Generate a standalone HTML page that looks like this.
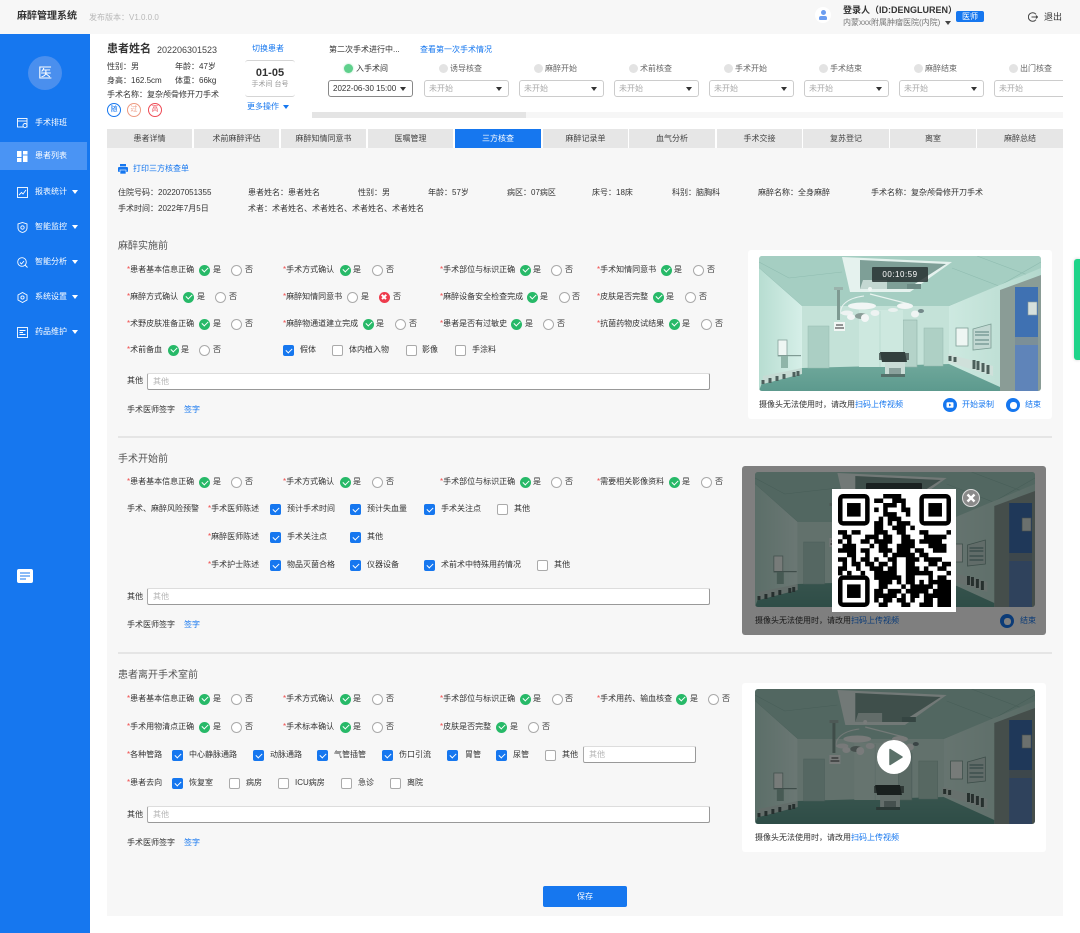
<!DOCTYPE html>
<html lang="zh-CN"><head><meta charset="utf-8"><title>麻醉管理系统</title>
<style>
html,body{margin:0;padding:0;width:1080px;height:933px;overflow:hidden;background:#fff}
body{position:relative;font-family:"Liberation Sans","Noto Sans CJK SC",sans-serif;color:#333;filter:blur(.35px)}
div,span,svg,i{position:absolute;box-sizing:border-box}
.t{font-size:8px;line-height:10px;white-space:nowrap;color:#333}
.b{color:#1677ef}
.w{color:#fff}
.s{color:#f04a4a;font-weight:400}
.h{font-size:10px;line-height:12px;color:#555;white-space:nowrap}
.g,.o,.x{width:11px;height:11px;border-radius:50%}
.o{background:#fff;border:1px solid #aaa}
.g{background:#27b968}
.x{background:#ee3b4c}
.g:after,.c:after{content:"";position:absolute;left:3px;top:2.6px;width:5px;height:3px;border-left:1.3px solid #fff;border-bottom:1.3px solid #fff;transform:rotate(-45deg)}
.x:before,.x:after{content:"";position:absolute;left:2.5px;top:4.7px;width:6px;height:1.6px;background:#fff;transform:rotate(45deg)}
.x:after{transform:rotate(-45deg)}
.c,.u{width:11px;height:11px;border-radius:2px}
.c{background:#1677ef}
.u{background:#fff;border:1px solid #aaa}
.in{background:#fff;border:1px solid #bbb;border-top-color:#ddd;border-left-color:#aaa;border-bottom-color:#999;border-right-color:#999;border-radius:2px;height:17px}
.in span{left:5px;top:3px;font-size:8px;line-height:10px;color:#b5b5b5}
.tab{top:129px;height:19px;background:#e6e6e6;font-size:8px;line-height:19px;text-align:center;color:#444}
.sel{top:80px;height:17px;width:85px;border:1px solid #ccc;border-radius:3px;background:#fff;font-size:8px;line-height:15px;padding-left:4px;color:#aaa;white-space:nowrap}
.sel:after{content:"";position:absolute;right:6px;top:6px;border-left:3px solid transparent;border-right:3px solid transparent;border-top:4px solid #333}
.d{width:9px;height:9px;border-radius:50%;background:#e3e3e3;top:64px}
.card{background:#fff;border-radius:3px}
.dn{border-left:3px solid transparent;border-right:3px solid transparent;border-top:4px solid #fff;width:0;height:0}
.div{left:118px;width:934px;height:2px;background:#e5e5e5}
</style></head><body>

<svg width="0" height="0" style="left:0;top:0">
<defs>
<linearGradient id="lw" x1="0" y1="0" x2="1" y2="0"><stop offset="0" stop-color="#b7ddd1"/><stop offset="1" stop-color="#d6efe8"/></linearGradient>
<linearGradient id="rw" x1="0" y1="0" x2="1" y2="0"><stop offset="0" stop-color="#cde9e0"/><stop offset="1" stop-color="#b4d8cd"/></linearGradient>
<linearGradient id="fl" x1="0" y1="0" x2="0" y2="1"><stop offset="0" stop-color="#6fa89b"/><stop offset="1" stop-color="#5d9a8e"/></linearGradient>
<symbol id="room" viewBox="0 0 282 135">
<rect width="282" height="135" fill="#a8cfc4"/>
<polygon points="0,0 282,0 282,14 190,50 43,50 0,12" fill="#a5cec2"/>
<path d="M0 12 43 50M282 14 190 50M0 6 30 22 83 16M193 12 240 30 282 6M218 0 282 24" stroke="#8fbcb0" stroke-width=".6" fill="none"/>
<polygon points="0,12 43,50 43,112 4,124 0,135" fill="url(#lw)"/>
<rect x="43" y="50" width="147" height="62" fill="#c4e2d8"/>
<polygon points="190,50 282,12 282,135 240,135 190,108" fill="url(#rw)"/>
<polygon points="0,135 4,124 43,112 190,108 241,131 241,135" fill="url(#fl)"/>
<polygon points="83,1 193,6 151,36 91,36" fill="#e5f2ee"/>
<polygon points="101,4 187,8 148,33 101,33" fill="#7e9f97"/>
<polygon points="104,24 128,24 128,33 101,33" fill="#c4d8d2"/>
<rect x="148" y="28" width="14" height="5" fill="#6b8a84"/>
<rect x="49" y="70" width="21" height="42" fill="#abcfc4" stroke="#95bbb0" stroke-width=".5"/>
<rect x="144" y="64" width="14" height="47" fill="#b4d3c9" stroke="#8fb3a8" stroke-width=".6"/>
<rect x="165" y="72" width="19" height="38" fill="#aed0c5" stroke="#96b9ae" stroke-width=".5"/>
<rect x="100" y="54" width="44" height="57" fill="#cde8df"/>
<path d="M121 55V111" stroke="#abcfc4" stroke-width=".5"/>
<rect x="197" y="72" width="12" height="18" fill="#eef6f3" stroke="#7f9f97" stroke-width=".8"/>
<polygon points="214,73 232,68 232,92 214,94" fill="#c2d8d2" stroke="#7b9d94" stroke-width=".8"/>
<path d="M216 76h14M216 79h14M216 84h14M216 88h14" stroke="#58807c" stroke-width="1"/>
<rect x="19" y="84" width="9" height="16" fill="#eef6f3" stroke="#86a29b" stroke-width=".8"/>
<rect x="19" y="99" width="23" height="1.2" fill="#7f9b94"/>
<rect x="22" y="100" width="7" height="12" fill="#8fb5a9"/>
<polygon points="4,120 43,112 43,118 4,128" fill="#c6dbd4"/>
<path d="M4 124v4M11 122v5M18 120v5M25 118v5M35 116v5M39 115v5" stroke="#4d5f5c" stroke-width="3"/>
<polygon points="189,106 234,120 234,110 189,98" fill="#cfe0da"/>
<path d="M191 105v-5M196 106v-5M215 113v-9M219 114v-9M224 116v-9M229 118v-9" stroke="#4c5f5b" stroke-width="3"/>
<polygon points="241,34 282,19 282,135 241,135" fill="#8a9c96"/>
<rect x="256" y="31" width="23" height="50" fill="#3f71b2"/>
<rect x="256" y="81" width="23" height="8" fill="#7b8f98"/>
<rect x="256" y="89" width="23" height="46" fill="#5f84b9"/>
<rect x="269" y="46" width="9" height="13" fill="#d6e0dc" stroke="#89999a" stroke-width=".6"/>
<rect x="120" y="97" width="30" height="7" fill="#5a6c68"/>
<polygon points="121,96 146,96 148,106 123,106" fill="#33403e"/>
<rect x="126" y="106" width="20" height="12" fill="#c9dcd6"/>
<rect x="130" y="112" width="12" height="6" fill="#8aa19c"/>
<rect x="122" y="118" width="24" height="3" fill="#55706a"/>
<path d="M105 40C88 42 80 50 82 58" fill="none" stroke="#e7f2ef" stroke-width="1"/>
<path d="M111 38 150 48" stroke="#e9f4f0" stroke-width="1.2"/>
<rect x="78" y="32" width="3" height="32" fill="#7e9a92"/>
<rect x="75" y="31" width="9" height="3" fill="#9ab3ac"/>
<rect x="75" y="66" width="11" height="9" fill="#f1f6f4"/>
<path d="M76 72h9M77 69h7" stroke="#333" stroke-width="1"/>
<ellipse cx="103" cy="50" rx="14" ry="3.5" fill="#f2f6f5"/>
<ellipse cx="88" cy="57" rx="6" ry="2.5" fill="#eef3f2"/>
<ellipse cx="102" cy="60" rx="6" ry="3" fill="#8a9d98"/>
<ellipse cx="92" cy="61" rx="4" ry="3" fill="#f3f6f6"/>
<ellipse cx="106" cy="62" rx="4" ry="4" fill="#f3f6f6"/>
<ellipse cx="116" cy="57" rx="4.5" ry="3" fill="#eef3f2"/>
<ellipse cx="146" cy="50" rx="8" ry="3" fill="#f2f6f5"/>
<ellipse cx="134" cy="54" rx="5" ry="2" fill="#e9f1ef"/>
<ellipse cx="156" cy="58" rx="4" ry="3.5" fill="#eff4f3"/>
<ellipse cx="162" cy="55" rx="3" ry="2" fill="#74898a"/>
<circle cx="111" cy="33" r="2" fill="#f2f8f6"/>
</symbol>
</defs>
</svg>

<!-- top bar -->
<div style="left:0;top:0;width:1080px;height:34px;background:#f7f7f7"></div>
<span style="left:17px;top:11px;font-size:10px;line-height:12px;font-weight:700;color:#333;white-space:nowrap">麻醉管理系统</span>
<span class="t" style="left:89px;top:13px;color:#b8b8b8">发布版本：V1.0.0.0</span>
<div style="left:815px;top:7px;width:16px;height:16px;border-radius:50%;background:#fff"></div>
<div style="left:820.5px;top:10px;width:5px;height:5px;border-radius:50%;background:#6b9df0"></div>
<div style="left:819px;top:15.5px;width:8px;height:4px;border-radius:2px 2px 1px 1px;background:#6b9df0"></div>
<span style="left:843px;top:5px;font-size:9px;line-height:11px;color:#333;white-space:nowrap;font-weight:700">登录人（ID:DENGLUREN）</span>
<span class="t" style="left:843px;top:18px;color:#777">内蒙xxx附属肿瘤医院(内院)</span>
<div style="left:945px;top:21px;border-left:3px solid transparent;border-right:3px solid transparent;border-top:4px solid #444;width:0;height:0"></div>
<div class="t w" style="left:956px;top:11px;width:28px;height:11px;background:#1677ef;border-radius:2px;text-align:center;line-height:11px;color:#fff">医师</div>
<svg style="left:1028px;top:12px" width="10" height="10" viewBox="0 0 10 10" fill="none" stroke="#444" stroke-width="1"><path d="M8 2.3A4.3 4.3 0 1 0 8 7.7"/><path d="M3.5 5H9.5M8 3.5 9.5 5 8 6.5"/></svg>
<span style="left:1044px;top:12px;font-size:9px;line-height:11px;color:#333;white-space:nowrap">退出</span>

<!-- sidebar -->
<div style="left:0;top:34px;width:90px;height:899px;background:#1677ef"></div>
<div style="left:0;top:142px;width:87px;height:28px;background:#4a94f4"></div>
<div style="left:28px;top:56px;width:34px;height:34px;border-radius:50%;background:#4a8fee;color:#fff;font-size:14px;line-height:34px;text-align:center">医</div>
<svg style="left:17px;top:118px" width="11" height="10" viewBox="0 0 11 10" fill="none" stroke="#fff" stroke-width=".9"><rect x=".5" y=".5" width="9.5" height="8.5"/><path d="M.5 3H10"/><circle cx="8" cy="7.5" r="2" fill="#1677ef"/></svg>
<span class="t w" style="left:35px;top:118px">手术排班</span>
<svg style="left:17px;top:151px" width="11" height="11" viewBox="0 0 11 11" fill="#fff"><rect width="4.5" height="6"/><rect y="7" width="4.5" height="4"/><rect x="6" width="4.5" height="3.5"/><rect x="6" y="4.5" width="4.5" height="6.5"/></svg>
<span class="t w" style="left:35px;top:151px">患者列表</span>
<svg style="left:17px;top:187px" width="11" height="11" viewBox="0 0 11 11" fill="none" stroke="#fff" stroke-width=".9"><rect x=".5" y=".5" width="10" height="10"/><path d="M2 8 4.5 5.5 6 7 9 3"/></svg>
<span class="t w" style="left:35px;top:187px">报表统计</span><i class="dn" style="left:72px;top:190px"></i>
<svg style="left:17px;top:222px" width="11" height="11" viewBox="0 0 11 11" fill="none" stroke="#fff" stroke-width=".9"><path d="M5.5.5 10 2V6C10 8.5 7.5 10 5.5 10.5 3.5 10 1 8.5 1 6V2Z"/><circle cx="5.5" cy="5.5" r="1.7"/></svg>
<span class="t w" style="left:35px;top:222px">智能监控</span><i class="dn" style="left:72px;top:225px"></i>
<svg style="left:17px;top:257px" width="11" height="11" viewBox="0 0 11 11" fill="none" stroke="#fff" stroke-width=".9"><circle cx="5" cy="5" r="4.3"/><path d="M8 8 10.5 10.5M3 5.5 4.5 7 7 4"/></svg>
<span class="t w" style="left:35px;top:257px">智能分析</span><i class="dn" style="left:72px;top:260px"></i>
<svg style="left:17px;top:292px" width="11" height="11" viewBox="0 0 11 11" fill="none" stroke="#fff" stroke-width=".9"><path d="M5.5.5 10 3V8L5.5 10.5 1 8V3Z"/><circle cx="5.5" cy="5.5" r="1.6"/></svg>
<span class="t w" style="left:35px;top:292px">系统设置</span><i class="dn" style="left:72px;top:295px"></i>
<svg style="left:17px;top:327px" width="11" height="11" viewBox="0 0 11 11" fill="none" stroke="#fff" stroke-width=".9"><rect x=".5" y=".5" width="10" height="10"/><path d="M2.5 3.5H8.5M2.5 5.5H6M2.5 7.5H8.5"/></svg>
<span class="t w" style="left:35px;top:327px">药品维护</span><i class="dn" style="left:72px;top:330px"></i>
<div style="left:17px;top:569px;width:16px;height:14px;background:#fff;border-radius:2px"></div>
<svg style="left:17px;top:569px" width="16" height="14" viewBox="0 0 16 14" stroke="#1677ef" stroke-width="1"><path d="M3 4H13M3 7H13M3 10H9"/></svg>

<!-- patient header -->
<span style="left:107px;top:42px;font-size:11px;line-height:14px;font-weight:700;color:#333;white-space:nowrap">患者姓名</span>
<span style="left:157px;top:44px;font-size:9px;line-height:12px;color:#444;white-space:nowrap">202206301523</span>
<span class="t" style="left:107px;top:62px">性别：男</span><span class="t" style="left:175px;top:62px">年龄：47岁</span>
<span class="t" style="left:107px;top:76px">身高：162.5cm</span><span class="t" style="left:175px;top:76px">体重：66kg</span>
<span class="t" style="left:107px;top:90px">手术名称：复杂颅骨修开刀手术</span>
<div style="left:107px;top:103px;width:14px;height:14px;border:1px solid #1677ef;border-radius:50%;font-size:7px;line-height:12px;text-align:center;color:#1677ef">随</div>
<div style="left:127px;top:103px;width:14px;height:14px;border:1px solid #ee9a80;border-radius:50%;font-size:7px;line-height:12px;text-align:center;color:#ee9a80">过</div>
<div style="left:148px;top:103px;width:14px;height:14px;border:1px solid #ee4a55;border-radius:50%;font-size:7px;line-height:12px;text-align:center;color:#ee4a55">高</div>
<span class="t b" style="left:252px;top:44px">切换患者</span>
<div style="left:245px;top:60px;width:50px;height:37px;border-top:1px solid #d5d5d5;border-bottom:1px solid #d5d5d5;border-radius:3px;background:#fff"></div>
<div style="left:245px;top:66px;width:50px;text-align:center;font-size:11px;line-height:14px;font-weight:700;color:#333">01-05</div>
<div style="left:245px;top:80px;width:50px;text-align:center;font-size:7px;line-height:10px;color:#999">手术间 台号</div>
<span class="t b" style="left:247px;top:102px">更多操作</span>
<div style="left:283px;top:105px;border-left:3px solid transparent;border-right:3px solid transparent;border-top:4px solid #1677ef;width:0;height:0"></div>

<span class="t" style="left:329px;top:45px">第二次手术进行中...</span>
<span class="t b" style="left:420px;top:45px">查看第一次手术情况</span>
<div class="d" style="left:344px;background:#5fd08c;box-shadow:0 0 2px #9fe3ba"></div><span class="t" style="left:356px;top:64px;color:#333">入手术间</span>
<div class="d" style="left:439px"></div><span class="t" style="left:450px;top:64px;color:#666">诱导核查</span>
<div class="d" style="left:534px"></div><span class="t" style="left:545px;top:64px;color:#666">麻醉开始</span>
<div class="d" style="left:629px"></div><span class="t" style="left:640px;top:64px;color:#666">术前核查</span>
<div class="d" style="left:724px"></div><span class="t" style="left:735px;top:64px;color:#666">手术开始</span>
<div class="d" style="left:819px"></div><span class="t" style="left:830px;top:64px;color:#666">手术结束</span>
<div class="d" style="left:914px"></div><span class="t" style="left:925px;top:64px;color:#666">麻醉结束</span>
<div class="d" style="left:1009px"></div><span class="t" style="left:1020px;top:64px;color:#666">出门核查</span>
<div class="sel" style="left:328px;color:#333;border-color:#888">2022-06-30 15:00</div>
<div class="sel" style="left:424px">未开始</div>
<div class="sel" style="left:519px">未开始</div>
<div class="sel" style="left:614px">未开始</div>
<div class="sel" style="left:709px">未开始</div>
<div class="sel" style="left:804px">未开始</div>
<div class="sel" style="left:899px">未开始</div>
<div style="left:994px;top:80px;width:69px;height:17px;border:1px solid #ccc;border-right:0;border-radius:3px 0 0 3px;font-size:8px;line-height:15px;padding-left:4px;color:#aaa">未开始</div>
<div style="left:312px;top:112px;width:751px;height:6px;background:#f6f6f6"></div>
<div style="left:312px;top:112px;width:214px;height:6px;background:#e4e4e4"></div>

<!-- tabs -->
<div class="tab" style="left:107px;width:85px">患者详情</div>
<div class="tab" style="left:194px;width:85px">术前麻醉评估</div>
<div class="tab" style="left:281px;width:85px">麻醉知情同意书</div>
<div class="tab" style="left:368px;width:85px">医嘱管理</div>
<div class="tab" style="left:455px;width:86px;background:#1677ef;color:#fff">三方核查</div>
<div class="tab" style="left:543px;width:85px">麻醉记录单</div>
<div class="tab" style="left:629px;width:86px">血气分析</div>
<div class="tab" style="left:717px;width:85px">手术交接</div>
<div class="tab" style="left:803px;width:86px">复苏登记</div>
<div class="tab" style="left:890px;width:86px">离室</div>
<div class="tab" style="left:977px;width:86px">麻醉总结</div>

<!-- panel -->
<div style="left:107px;top:148px;width:956px;height:768px;background:#f7f7f7"></div>
<svg style="left:118px;top:164px" width="10" height="10" viewBox="0 0 10 10" fill="#1677ef"><rect x="2" width="6" height="2.4"/><rect y="3" width="10" height="5" rx="1"/><rect x="2" y="6" width="6" height="4" fill="#1677ef" stroke="#fff" stroke-width=".6"/></svg>
<span class="t b" style="left:133px;top:164px">打印三方核查单</span>
<span class="t" style="left:118px;top:188px">住院号码：202207051355</span>
<span class="t" style="left:248px;top:188px">患者姓名：患者姓名</span>
<span class="t" style="left:358px;top:188px">性别：男</span>
<span class="t" style="left:428px;top:188px">年龄：57岁</span>
<span class="t" style="left:507px;top:188px">病区：07病区</span>
<span class="t" style="left:592px;top:188px">床号：18床</span>
<span class="t" style="left:672px;top:188px">科别：脑胸科</span>
<span class="t" style="left:758px;top:188px">麻醉名称：全身麻醉</span>
<span class="t" style="left:871px;top:188px">手术名称：复杂颅骨修开刀手术</span>
<span class="t" style="left:118px;top:204px">手术时间：2022年7月5日</span>
<span class="t" style="left:248px;top:204px">术者：术者姓名、术者姓名、术者姓名、术者姓名</span>

<!-- Section 1 -->
<span class="h" style="left:118px;top:241px">麻醉实施前</span>
<span class="t" style="left:127px;top:265px"><b class="s">*</b>患者基本信息正确</span><i class="g" style="left:198.5px;top:264.5px"></i><span class="t" style="left:213px;top:265px">是</span><i class="o" style="left:230.5px;top:264.5px"></i><span class="t" style="left:245px;top:265px">否</span>
<span class="t" style="left:283px;top:265px"><b class="s">*</b>手术方式确认</span><i class="g" style="left:339.5px;top:264.5px"></i><span class="t" style="left:353px;top:265px">是</span><i class="o" style="left:371.5px;top:264.5px"></i><span class="t" style="left:386px;top:265px">否</span>
<span class="t" style="left:440px;top:265px"><b class="s">*</b>手术部位与标识正确</span><i class="g" style="left:519.5px;top:264.5px"></i><span class="t" style="left:533px;top:265px">是</span><i class="o" style="left:550.5px;top:264.5px"></i><span class="t" style="left:565px;top:265px">否</span>
<span class="t" style="left:597px;top:265px"><b class="s">*</b>手术知情同意书</span><i class="g" style="left:660.5px;top:264.5px"></i><span class="t" style="left:674px;top:265px">是</span><i class="o" style="left:692.5px;top:264.5px"></i><span class="t" style="left:707px;top:265px">否</span>

<span class="t" style="left:127px;top:292px"><b class="s">*</b>麻醉方式确认</span><i class="g" style="left:182.5px;top:291.5px"></i><span class="t" style="left:197px;top:292px">是</span><i class="o" style="left:214.5px;top:291.5px"></i><span class="t" style="left:229px;top:292px">否</span>
<span class="t" style="left:283px;top:292px"><b class="s">*</b>麻醉知情同意书</span><i class="o" style="left:346.5px;top:291.5px"></i><span class="t" style="left:361px;top:292px">是</span><i class="x" style="left:378.5px;top:291.5px"></i><span class="t" style="left:393px;top:292px">否</span>
<span class="t" style="left:440px;top:292px"><b class="s">*</b>麻醉设备安全检查完成</span><i class="g" style="left:526.5px;top:291.5px"></i><span class="t" style="left:540px;top:292px">是</span><i class="o" style="left:558.5px;top:291.5px"></i><span class="t" style="left:572px;top:292px">否</span>
<span class="t" style="left:597px;top:292px"><b class="s">*</b>皮肤是否完整</span><i class="g" style="left:652.5px;top:291.5px"></i><span class="t" style="left:666px;top:292px">是</span><i class="o" style="left:684.5px;top:291.5px"></i><span class="t" style="left:699px;top:292px">否</span>

<span class="t" style="left:127px;top:319px"><b class="s">*</b>术野皮肤准备正确</span><i class="g" style="left:198.5px;top:318.5px"></i><span class="t" style="left:213px;top:319px">是</span><i class="o" style="left:230.5px;top:318.5px"></i><span class="t" style="left:245px;top:319px">否</span>
<span class="t" style="left:283px;top:319px"><b class="s">*</b>麻醉物通道建立完成</span><i class="g" style="left:362.5px;top:318.5px"></i><span class="t" style="left:376px;top:319px">是</span><i class="o" style="left:394.5px;top:318.5px"></i><span class="t" style="left:409px;top:319px">否</span>
<span class="t" style="left:440px;top:319px"><b class="s">*</b>患者是否有过敏史</span><i class="g" style="left:510.5px;top:318.5px"></i><span class="t" style="left:525px;top:319px">是</span><i class="o" style="left:542.5px;top:318.5px"></i><span class="t" style="left:557px;top:319px">否</span>
<span class="t" style="left:597px;top:319px"><b class="s">*</b>抗菌药物皮试结果</span><i class="g" style="left:668.5px;top:318.5px"></i><span class="t" style="left:682px;top:319px">是</span><i class="o" style="left:700.5px;top:318.5px"></i><span class="t" style="left:715px;top:319px">否</span>

<span class="t" style="left:127px;top:345px"><b class="s">*</b>术前备血</span><i class="g" style="left:167.5px;top:344.5px"></i><span class="t" style="left:181px;top:345px">是</span><i class="o" style="left:198.5px;top:344.5px"></i><span class="t" style="left:213px;top:345px">否</span>
<i class="c" style="left:283px;top:345px"></i><span class="t" style="left:300px;top:345px">假体</span>
<i class="u" style="left:332px;top:345px"></i><span class="t" style="left:349px;top:345px">体内植入物</span>
<i class="u" style="left:406px;top:345px"></i><span class="t" style="left:422px;top:345px">影像</span>
<i class="u" style="left:455px;top:345px"></i><span class="t" style="left:472px;top:345px">手涂料</span>
<span class="t" style="left:127px;top:376px">其他</span>
<div class="in" style="left:147px;top:373px;width:563px"><span>其他</span></div>
<span class="t" style="left:127px;top:405px">手术医师签字</span><span class="t b" style="left:184px;top:405px">签字</span>
<div class="div" style="top:436px"></div>

<!-- Section 2 -->
<span class="h" style="left:118px;top:454px">手术开始前</span>
<span class="t" style="left:127px;top:477px"><b class="s">*</b>患者基本信息正确</span><i class="g" style="left:198.5px;top:477px"></i><span class="t" style="left:213px;top:477px">是</span><i class="o" style="left:230.5px;top:477px"></i><span class="t" style="left:245px;top:477px">否</span>
<span class="t" style="left:283px;top:477px"><b class="s">*</b>手术方式确认</span><i class="g" style="left:339.5px;top:477px"></i><span class="t" style="left:353px;top:477px">是</span><i class="o" style="left:371.5px;top:477px"></i><span class="t" style="left:386px;top:477px">否</span>
<span class="t" style="left:440px;top:477px"><b class="s">*</b>手术部位与标识正确</span><i class="g" style="left:519.5px;top:477px"></i><span class="t" style="left:533px;top:477px">是</span><i class="o" style="left:550.5px;top:477px"></i><span class="t" style="left:565px;top:477px">否</span>
<span class="t" style="left:597px;top:477px"><b class="s">*</b>需要相关影像资料</span><i class="g" style="left:668.5px;top:477px"></i><span class="t" style="left:682px;top:477px">是</span><i class="o" style="left:700.5px;top:477px"></i><span class="t" style="left:715px;top:477px">否</span>

<span class="t" style="left:127px;top:504px">手术、麻醉风险预警</span>
<span class="t" style="left:208px;top:504px"><b class="s">*</b>手术医师陈述</span>
<i class="c" style="left:270px;top:504px"></i><span class="t" style="left:287px;top:504px">预计手术时间</span>
<i class="c" style="left:350px;top:504px"></i><span class="t" style="left:367px;top:504px">预计失血量</span>
<i class="c" style="left:424px;top:504px"></i><span class="t" style="left:441px;top:504px">手术关注点</span>
<i class="u" style="left:497px;top:504px"></i><span class="t" style="left:514px;top:504px">其他</span>
<span class="t" style="left:208px;top:532px"><b class="s">*</b>麻醉医师陈述</span>
<i class="c" style="left:270px;top:532px"></i><span class="t" style="left:287px;top:532px">手术关注点</span>
<i class="c" style="left:350px;top:532px"></i><span class="t" style="left:367px;top:532px">其他</span>
<span class="t" style="left:208px;top:560px"><b class="s">*</b>手术护士陈述</span>
<i class="c" style="left:270px;top:560px"></i><span class="t" style="left:287px;top:560px">物品灭菌合格</span>
<i class="c" style="left:350px;top:560px"></i><span class="t" style="left:367px;top:560px">仪器设备</span>
<i class="c" style="left:424px;top:560px"></i><span class="t" style="left:441px;top:560px">术前术中特殊用药情况</span>
<i class="u" style="left:537px;top:560px"></i><span class="t" style="left:554px;top:560px">其他</span>
<span class="t" style="left:127px;top:592px">其他</span>
<div class="in" style="left:147px;top:588px;width:563px"><span>其他</span></div>
<span class="t" style="left:127px;top:620px">手术医师签字</span><span class="t b" style="left:184px;top:620px">签字</span>
<div class="div" style="top:652px"></div>

<!-- Section 3 -->
<span class="h" style="left:118px;top:670px">患者离开手术室前</span>
<span class="t" style="left:127px;top:694px"><b class="s">*</b>患者基本信息正确</span><i class="g" style="left:198.5px;top:693.5px"></i><span class="t" style="left:213px;top:694px">是</span><i class="o" style="left:230.5px;top:693.5px"></i><span class="t" style="left:245px;top:694px">否</span>
<span class="t" style="left:283px;top:694px"><b class="s">*</b>手术方式确认</span><i class="g" style="left:339.5px;top:693.5px"></i><span class="t" style="left:353px;top:694px">是</span><i class="o" style="left:371.5px;top:693.5px"></i><span class="t" style="left:386px;top:694px">否</span>
<span class="t" style="left:440px;top:694px"><b class="s">*</b>手术部位与标识正确</span><i class="g" style="left:519.5px;top:693.5px"></i><span class="t" style="left:533px;top:694px">是</span><i class="o" style="left:551.5px;top:693.5px"></i><span class="t" style="left:565px;top:694px">否</span>
<span class="t" style="left:597px;top:694px"><b class="s">*</b>手术用药、输血核查</span><i class="g" style="left:675.5px;top:693.5px"></i><span class="t" style="left:690px;top:694px">是</span><i class="o" style="left:707.5px;top:693.5px"></i><span class="t" style="left:722px;top:694px">否</span>

<span class="t" style="left:127px;top:722px"><b class="s">*</b>手术用物清点正确</span><i class="g" style="left:198.5px;top:721.5px"></i><span class="t" style="left:213px;top:722px">是</span><i class="o" style="left:230.5px;top:721.5px"></i><span class="t" style="left:245px;top:722px">否</span>
<span class="t" style="left:283px;top:722px"><b class="s">*</b>手术标本确认</span><i class="g" style="left:339.5px;top:721.5px"></i><span class="t" style="left:353px;top:722px">是</span><i class="o" style="left:371.5px;top:721.5px"></i><span class="t" style="left:386px;top:722px">否</span>
<span class="t" style="left:440px;top:722px"><b class="s">*</b>皮肤是否完整</span><i class="g" style="left:495.5px;top:721.5px"></i><span class="t" style="left:510px;top:722px">是</span><i class="o" style="left:527.5px;top:721.5px"></i><span class="t" style="left:542px;top:722px">否</span>

<span class="t" style="left:127px;top:750px"><b class="s">*</b>各种管路</span>
<i class="c" style="left:172px;top:750px"></i><span class="t" style="left:189px;top:750px">中心静脉通路</span>
<i class="c" style="left:253px;top:750px"></i><span class="t" style="left:270px;top:750px">动脉通路</span>
<i class="c" style="left:317px;top:750px"></i><span class="t" style="left:334px;top:750px">气管插管</span>
<i class="c" style="left:382px;top:750px"></i><span class="t" style="left:399px;top:750px">伤口引流</span>
<i class="c" style="left:447px;top:750px"></i><span class="t" style="left:465px;top:750px">胃管</span>
<i class="c" style="left:496px;top:750px"></i><span class="t" style="left:513px;top:750px">尿管</span>
<i class="u" style="left:545px;top:750px"></i><span class="t" style="left:562px;top:750px">其他</span>
<div class="in" style="left:583px;top:746px;width:113px"><span>其他</span></div>

<span class="t" style="left:127px;top:778px"><b class="s">*</b>患者去向</span>
<i class="c" style="left:172px;top:778px"></i><span class="t" style="left:189px;top:778px">恢复室</span>
<i class="u" style="left:229px;top:778px"></i><span class="t" style="left:246px;top:778px">病房</span>
<i class="u" style="left:278px;top:778px"></i><span class="t" style="left:295px;top:778px">ICU病房</span>
<i class="u" style="left:341px;top:778px"></i><span class="t" style="left:358px;top:778px">急诊</span>
<i class="u" style="left:390px;top:778px"></i><span class="t" style="left:407px;top:778px">离院</span>
<span class="t" style="left:127px;top:810px">其他</span>
<div class="in" style="left:147px;top:806px;width:563px"><span>其他</span></div>
<span class="t" style="left:127px;top:838px">手术医师签字</span><span class="t b" style="left:184px;top:838px">签字</span>
<div style="left:543px;top:886px;width:84px;height:21px;background:#1677ef;border-radius:2px;color:#fff;font-size:8px;line-height:21px;text-align:center">保存</div>

<!-- Card 1 -->
<div class="card" style="left:748px;top:250px;width:304px;height:169px"></div>
<svg style="left:759px;top:256px;border-radius:3px" width="282" height="135"><use href="#room"/></svg>
<div style="left:872px;top:267px;width:56px;height:15px;background:rgba(40,50,50,.85);border-radius:1px;color:#fff;font-size:8px;line-height:15px;text-align:center;letter-spacing:.5px">00:10:59</div>
<span class="t" style="left:759px;top:400px">摄像头无法使用时，请改用<span class="b" style="position:static">扫码上传视频</span></span>
<svg style="left:943px;top:398px" width="14" height="14" viewBox="0 0 14 14"><circle cx="7" cy="7" r="7" fill="#1677ef"/><rect x="3.5" y="4.2" width="7" height="5.6" rx="1" fill="#fff"/><path d="M6 5.5 8.4 7 6 8.5Z" fill="#1677ef"/></svg>
<span class="t b" style="left:962px;top:400px">开始录制</span>
<div style="left:1006px;top:398px;width:14px;height:14px;border-radius:50%;background:#1677ef"></div>
<div style="left:1009.5px;top:401.5px;width:7px;height:7px;background:#fff;border-radius:3px"></div>
<span class="t b" style="left:1025px;top:400px">结束</span>

<!-- Card 2 -->
<div class="card" style="left:742px;top:466px;width:304px;height:169px"></div>
<svg style="left:755px;top:472px;border-radius:3px" width="280" height="135" viewBox="0 0 282 135" preserveAspectRatio="none"><use href="#room"/></svg>
<div style="left:866px;top:483px;width:56px;height:15px;background:rgba(40,50,50,.85);border-radius:1px"></div>
<span class="t" style="left:755px;top:616px">摄像头无法使用时，请改用<span class="b" style="position:static">扫码上传视频</span></span>
<div style="left:1000px;top:614px;width:14px;height:14px;border-radius:50%;background:#1677ef"></div>
<div style="left:1003.5px;top:617.5px;width:7px;height:7px;background:#fff;border-radius:3px"></div>
<span class="t b" style="left:1020px;top:616px">结束</span>
<div style="left:742px;top:466px;width:304px;height:169px;background:rgba(0,0,0,.5);border-radius:3px"></div>
<div style="left:832px;top:489px;width:124px;height:123px;background:#fff"></div>
<svg style="left:838px;top:494px" width="113" height="113" viewBox="0 0 25 25">
<g fill="none" stroke="#000" stroke-width="1"><rect x=".5" y=".5" width="6" height="6" rx=".6"/><rect x="18.5" y=".5" width="6" height="6" rx=".6"/><rect x=".5" y="18.5" width="6" height="6" rx=".6"/></g>
<rect x="2" y="2" width="3" height="3"/><rect x="20" y="2" width="3" height="3"/><rect x="2" y="20" width="3" height="3"/>
<path fill="none" stroke="#000" stroke-width="1" d="M10 .5h4M8 1.5h2M12 1.5h3M10 2.5h3M14 2.5h1M8 3.5h1M10 3.5h1M14 3.5h2M10 4.5h3M15 4.5h1M9 5.5h1M11 5.5h3M8 6.5h2M11 6.5h1M13 6.5h3M8 7.5h2M12 7.5h3M16 7.5h1M0 8.5h2M3 8.5h2M8 8.5h3M13 8.5h2M18 8.5h2M24 8.5h1M1 9.5h2M6 9.5h3M10 9.5h2M14 9.5h2M19 9.5h5M0 10.5h1M2 10.5h1M5 10.5h2M8 10.5h4M14 10.5h3M18 10.5h5M1 11.5h3M7 11.5h1M9 11.5h2M13 11.5h4M20 11.5h4M0 12.5h4M5 12.5h2M9 12.5h3M13 12.5h3M17 12.5h2M21 12.5h3M2 13.5h2M6 13.5h1M10 13.5h1M12 13.5h5M18 13.5h2M0 14.5h2M3 14.5h1M5 14.5h2M8 14.5h1M11 14.5h2M15 14.5h3M19 14.5h4M1 15.5h1M3 15.5h2M6 15.5h2M9 15.5h2M12 15.5h1M15 15.5h2M20 15.5h2M23 15.5h2M0 16.5h2M4 16.5h1M7 16.5h3M11 16.5h2M15 16.5h3M19 16.5h1M22 16.5h2M0 17.5h1M2 17.5h1M5 17.5h1M8 17.5h5M15 17.5h2M17 17.5h4M24 17.5h1M8 18.5h6M15 18.5h2M20 18.5h1M22 18.5h2M9 19.5h3M13 19.5h1M15 19.5h2M18 19.5h1M20 19.5h5M9 20.5h2M14 20.5h1M16 20.5h5M22 20.5h3M8 21.5h2M11 21.5h3M15 21.5h5M21 21.5h4M8 22.5h5M14 22.5h1M16 22.5h2M19 22.5h6M8 23.5h1M10 23.5h2M13 23.5h2M16 23.5h1M19 23.5h2M22 23.5h3M9 24.5h2M14 24.5h2M18 24.5h3M22 24.5h3"/>
</svg>
<div style="left:962px;top:489px;width:18px;height:18px;border-radius:50%;background:#8a8a8a;border:1px solid #ddd"></div>
<svg style="left:962px;top:489px" width="18" height="18" viewBox="0 0 18 18" stroke="#fff" stroke-width="2.4"><path d="M5.5 5.5 12.5 12.5M12.5 5.5 5.5 12.5"/></svg>

<!-- Card 3 -->
<div class="card" style="left:742px;top:683px;width:304px;height:169px"></div>
<svg style="left:755px;top:689px;border-radius:3px" width="280" height="135" viewBox="0 0 282 135" preserveAspectRatio="none"><use href="#room"/><rect width="282" height="135" fill="#000" fill-opacity=".5"/></svg>
<div style="left:877px;top:740px;width:34px;height:34px;border-radius:50%;background:#fff"></div>
<svg style="left:877px;top:740px" width="34" height="34" viewBox="0 0 34 34"><path d="M13 9.5 25 17 13 24.5Z" fill="#5b7169" stroke="#5b7169" stroke-width="1.5" stroke-linejoin="round"/></svg>
<span class="t" style="left:755px;top:833px">摄像头无法使用时，请改用<span class="b" style="position:static">扫码上传视频</span></span>

<!-- side green tab -->
<div style="left:1074px;top:259px;width:6px;height:101px;background:#1fd48a;border-radius:3px 0 0 3px;box-shadow:0 0 3px rgba(0,0,0,.2)"></div>
</body></html>
